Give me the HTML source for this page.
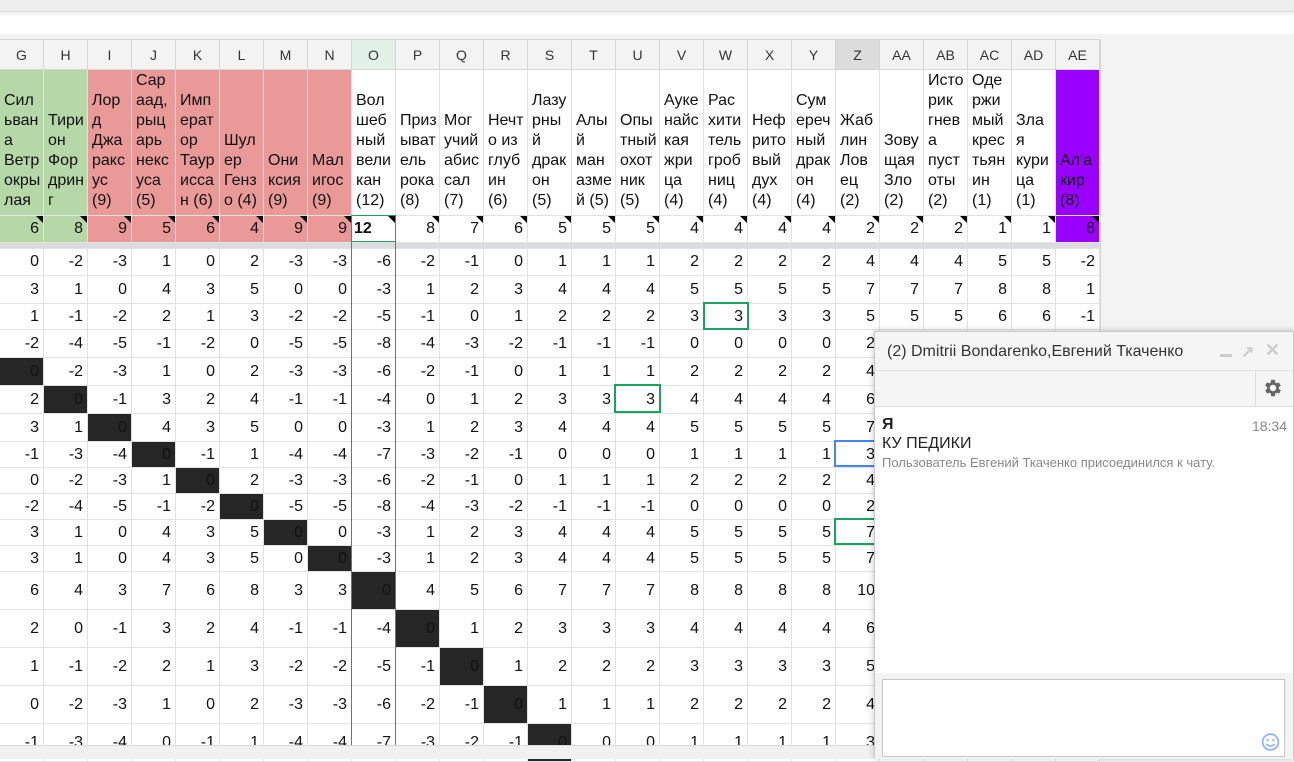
<!DOCTYPE html>
<html><head><meta charset="utf-8"><style>
body{margin:0;width:1294px;height:758px;overflow:hidden;background:#f3f3f3;font-family:"Liberation Sans",Arial,sans-serif;position:relative}
.top{position:absolute;left:0;top:0;width:1294px;height:11px;background:#eeeeee;border-bottom:1px solid #d8d8d8}
.bar{position:absolute;left:0;top:15px;width:1294px;height:19px;background:#fff}
table{position:absolute;left:-1px;top:39px;border-collapse:collapse;table-layout:fixed;background:#fff;width:1101px}
col{width:44px}
td{border:1px solid #e2e2e2;padding:0 4px 0 2px;font-size:16px;text-align:right;color:#111;overflow:hidden;white-space:nowrap}
tr.ch td{height:29px;background:#f3f3f3;text-align:center;font-size:14px;color:#333;border-color:#d6d6d6;padding:0}
tr.nm td{height:141px;text-align:left;vertical-align:bottom;line-height:20px;padding:0 0 4px 4px;white-space:normal;background:#fff}
tr.ct td{height:26px;position:relative}
tr.ct td::after{content:"";position:absolute;right:0;top:0;border-style:solid;border-width:0 7px 7px 0;border-color:transparent #000 transparent transparent}
tr.sp td{height:5px;background:#dadce0;border:none;padding:0}
.g{background:#b6d7a8!important}.r{background:#ea9999!important}.p{background:#9900ff!important}
.b{background:#262626}
tr.s td{height:37px}
</style></head><body>
<div class="top"></div><div class="bar"></div>
<table>
<colgroup><col><col><col><col><col><col><col><col><col><col><col><col><col><col><col><col><col><col><col><col><col><col><col><col><col></colgroup>
<tr class="ch"><td>G</td><td>H</td><td>I</td><td>J</td><td>K</td><td>L</td><td>M</td><td>N</td><td style="background:#e3f2e8">O</td><td>P</td><td>Q</td><td>R</td><td>S</td><td>T</td><td>U</td><td>V</td><td>W</td><td>X</td><td>Y</td><td style="background:#dcdcdc">Z</td><td>AA</td><td>AB</td><td>AC</td><td>AD</td><td>AE</td></tr>
<tr class="nm"><td class="g">Сил<br>ьван<br>а<br>Ветр<br>окры<br>лая</td><td class="g">Тири<br>он<br>Фор<br>дрин<br>г</td><td class="r">Лор<br>д<br>Джа<br>ракс<br>ус<br>(9)</td><td class="r">Сар<br>аад,<br>рыц<br>арь<br>некс<br>уса<br>(5)</td><td class="r">Имп<br>ерат<br>ор<br>Таур<br>исса<br>н (6)</td><td class="r">Шул<br>ер<br>Генз<br>о (4)</td><td class="r">Они<br>ксия<br>(9)</td><td class="r">Мал<br>игос<br>(9)</td><td>Вол<br>шеб<br>ный<br>вели<br>кан<br>(12)</td><td>Приз<br>ыват<br>ель<br>рока<br>(8)</td><td>Мог<br>учий<br>абис<br>сал<br>(7)</td><td>Нечт<br>о из<br>глуб<br>ин<br>(6)</td><td>Лазу<br>рны<br>й<br>драк<br>он<br>(5)</td><td>Алы<br>й<br>ман<br>азме<br>й (5)</td><td>Опы<br>тный<br>охот<br>ник<br>(5)</td><td>Ауке<br>найс<br>кая<br>жри<br>ца<br>(4)</td><td>Рас<br>хити<br>тель<br>гроб<br>ниц<br>(4)</td><td>Неф<br>рито<br>вый<br>дух<br>(4)</td><td>Сум<br>ереч<br>ный<br>драк<br>он<br>(4)</td><td>Жаб<br>лин<br>Лов<br>ец<br>(2)</td><td>Зову<br>щая<br>Зло<br>(2)</td><td>Исто<br>рик<br>гнев<br>а<br>пуст<br>оты<br>(2)</td><td>Оде<br>ржи<br>мый<br>крес<br>тьян<br>ин<br>(1)</td><td>Зла<br>я<br>кури<br>ца<br>(1)</td><td class="p">Ал'а<br>кир<br>(8)</td></tr>
<tr class="ct"><td class="g">6</td><td class="g">8</td><td class="r">9</td><td class="r">5</td><td class="r">6</td><td class="r">4</td><td class="r">9</td><td class="r">9</td><td style="text-align:left;font-weight:bold">12</td><td>8</td><td>7</td><td>6</td><td>5</td><td>5</td><td>5</td><td>4</td><td>4</td><td>4</td><td>4</td><td>2</td><td>2</td><td>2</td><td>1</td><td>1</td><td class="p">8</td></tr>
<tr class="sp"><td></td><td></td><td></td><td></td><td></td><td></td><td></td><td></td><td></td><td></td><td></td><td></td><td></td><td></td><td></td><td></td><td></td><td></td><td></td><td></td><td></td><td></td><td></td><td></td><td></td></tr>
<tr style="height:27px"><td>0</td><td>-2</td><td>-3</td><td>1</td><td>0</td><td>2</td><td>-3</td><td>-3</td><td>-6</td><td>-2</td><td>-1</td><td>0</td><td>1</td><td>1</td><td>1</td><td>2</td><td>2</td><td>2</td><td>2</td><td>4</td><td>4</td><td>4</td><td>5</td><td>5</td><td>-2</td></tr>
<tr style="height:28px"><td>3</td><td>1</td><td>0</td><td>4</td><td>3</td><td>5</td><td>0</td><td>0</td><td>-3</td><td>1</td><td>2</td><td>3</td><td>4</td><td>4</td><td>4</td><td>5</td><td>5</td><td>5</td><td>5</td><td>7</td><td>7</td><td>7</td><td>8</td><td>8</td><td>1</td></tr>
<tr style="height:26px"><td>1</td><td>-1</td><td>-2</td><td>2</td><td>1</td><td>3</td><td>-2</td><td>-2</td><td>-5</td><td>-1</td><td>0</td><td>1</td><td>2</td><td>2</td><td>2</td><td>3</td><td>3</td><td>3</td><td>3</td><td>5</td><td>5</td><td>5</td><td>6</td><td>6</td><td>-1</td></tr>
<tr style="height:28px"><td>-2</td><td>-4</td><td>-5</td><td>-1</td><td>-2</td><td>0</td><td>-5</td><td>-5</td><td>-8</td><td>-4</td><td>-3</td><td>-2</td><td>-1</td><td>-1</td><td>-1</td><td>0</td><td>0</td><td>0</td><td>0</td><td>2</td><td>2</td><td>2</td><td>3</td><td>3</td><td>-4</td></tr>
<tr style="height:28px"><td class="b">0</td><td>-2</td><td>-3</td><td>1</td><td>0</td><td>2</td><td>-3</td><td>-3</td><td>-6</td><td>-2</td><td>-1</td><td>0</td><td>1</td><td>1</td><td>1</td><td>2</td><td>2</td><td>2</td><td>2</td><td>4</td><td>4</td><td>4</td><td>5</td><td>5</td><td>-2</td></tr>
<tr style="height:28px"><td>2</td><td class="b">0</td><td>-1</td><td>3</td><td>2</td><td>4</td><td>-1</td><td>-1</td><td>-4</td><td>0</td><td>1</td><td>2</td><td>3</td><td>3</td><td>3</td><td>4</td><td>4</td><td>4</td><td>4</td><td>6</td><td>6</td><td>6</td><td>7</td><td>7</td><td>0</td></tr>
<tr style="height:28px"><td>3</td><td>1</td><td class="b">0</td><td>4</td><td>3</td><td>5</td><td>0</td><td>0</td><td>-3</td><td>1</td><td>2</td><td>3</td><td>4</td><td>4</td><td>4</td><td>5</td><td>5</td><td>5</td><td>5</td><td>7</td><td>7</td><td>7</td><td>8</td><td>8</td><td>1</td></tr>
<tr style="height:26px"><td>-1</td><td>-3</td><td>-4</td><td class="b">0</td><td>-1</td><td>1</td><td>-4</td><td>-4</td><td>-7</td><td>-3</td><td>-2</td><td>-1</td><td>0</td><td>0</td><td>0</td><td>1</td><td>1</td><td>1</td><td>1</td><td>3</td><td>3</td><td>3</td><td>4</td><td>4</td><td>-3</td></tr>
<tr style="height:26px"><td>0</td><td>-2</td><td>-3</td><td>1</td><td class="b">0</td><td>2</td><td>-3</td><td>-3</td><td>-6</td><td>-2</td><td>-1</td><td>0</td><td>1</td><td>1</td><td>1</td><td>2</td><td>2</td><td>2</td><td>2</td><td>4</td><td>4</td><td>4</td><td>5</td><td>5</td><td>-2</td></tr>
<tr style="height:26px"><td>-2</td><td>-4</td><td>-5</td><td>-1</td><td>-2</td><td class="b">0</td><td>-5</td><td>-5</td><td>-8</td><td>-4</td><td>-3</td><td>-2</td><td>-1</td><td>-1</td><td>-1</td><td>0</td><td>0</td><td>0</td><td>0</td><td>2</td><td>2</td><td>2</td><td>3</td><td>3</td><td>-4</td></tr>
<tr style="height:26px"><td>3</td><td>1</td><td>0</td><td>4</td><td>3</td><td>5</td><td class="b">0</td><td>0</td><td>-3</td><td>1</td><td>2</td><td>3</td><td>4</td><td>4</td><td>4</td><td>5</td><td>5</td><td>5</td><td>5</td><td>7</td><td>7</td><td>7</td><td>8</td><td>8</td><td>1</td></tr>
<tr style="height:26px"><td>3</td><td>1</td><td>0</td><td>4</td><td>3</td><td>5</td><td>0</td><td class="b">0</td><td>-3</td><td>1</td><td>2</td><td>3</td><td>4</td><td>4</td><td>4</td><td>5</td><td>5</td><td>5</td><td>5</td><td>7</td><td>7</td><td>7</td><td>8</td><td>8</td><td>1</td></tr>
<tr class="s"><td>6</td><td>4</td><td>3</td><td>7</td><td>6</td><td>8</td><td>3</td><td>3</td><td class="b">0</td><td>4</td><td>5</td><td>6</td><td>7</td><td>7</td><td>7</td><td>8</td><td>8</td><td>8</td><td>8</td><td>10</td><td>10</td><td>10</td><td>11</td><td>11</td><td>4</td></tr>
<tr class="s"><td>2</td><td>0</td><td>-1</td><td>3</td><td>2</td><td>4</td><td>-1</td><td>-1</td><td>-4</td><td class="b">0</td><td>1</td><td>2</td><td>3</td><td>3</td><td>3</td><td>4</td><td>4</td><td>4</td><td>4</td><td>6</td><td>6</td><td>6</td><td>7</td><td>7</td><td>0</td></tr>
<tr class="s"><td>1</td><td>-1</td><td>-2</td><td>2</td><td>1</td><td>3</td><td>-2</td><td>-2</td><td>-5</td><td>-1</td><td class="b">0</td><td>1</td><td>2</td><td>2</td><td>2</td><td>3</td><td>3</td><td>3</td><td>3</td><td>5</td><td>5</td><td>5</td><td>6</td><td>6</td><td>-1</td></tr>
<tr class="s"><td>0</td><td>-2</td><td>-3</td><td>1</td><td>0</td><td>2</td><td>-3</td><td>-3</td><td>-6</td><td>-2</td><td>-1</td><td class="b">0</td><td>1</td><td>1</td><td>1</td><td>2</td><td>2</td><td>2</td><td>2</td><td>4</td><td>4</td><td>4</td><td>5</td><td>5</td><td>-2</td></tr>
<tr class="s"><td>-1</td><td>-3</td><td>-4</td><td>0</td><td>-1</td><td>1</td><td>-4</td><td>-4</td><td>-7</td><td>-3</td><td>-2</td><td>-1</td><td class="b">0</td><td>0</td><td>0</td><td>1</td><td>1</td><td>1</td><td>1</td><td>3</td><td>3</td><td>3</td><td>4</td><td>4</td><td>-3</td></tr>
</table>
<div style="position:absolute;left:1100px;top:39px;width:1px;height:720px;background:#d6d6d6"></div>
<div style="position:absolute;left:351px;top:215px;width:1px;height:543px;background:#1aa260"></div>
<div style="position:absolute;left:395px;top:215px;width:1px;height:543px;background:#1aa260"></div>
<div style="position:absolute;left:351px;top:215px;width:43px;height:25px;border:1px solid #1aa260"></div>
<div style="position:absolute;left:703px;top:302px;width:42px;height:24px;border:2px solid #1aa260"></div>
<div style="position:absolute;left:614px;top:384px;width:43px;height:25px;border:2px solid #1aa260"></div>
<div style="position:absolute;left:834px;top:440px;width:44px;height:23px;border:2px solid #4285f4"></div>
<div style="position:absolute;left:834px;top:518px;width:44px;height:23px;border:2px solid #1aa260"></div>
<div style="position:absolute;left:0;top:745px;width:1294px;height:13px;background:#f1f1f1;border-top:1px solid #d8d8d8"></div>

<div style="position:absolute;left:874px;top:331px;width:420px;height:427px;background:#fff;border:1px solid #c8c8c8;box-shadow:0 0 6px rgba(0,0,0,.25);box-sizing:border-box">
 <div style="height:38px;background:#f5f5f5;border-bottom:1px solid #e3e3e3;position:relative">
  <div style="position:absolute;left:12px;top:11px;font-size:16px;color:#333">(2) Dmitrii Bondarenko,Евгений Ткаченко</div>
  <div style="position:absolute;left:345px;top:22px;width:12px;height:3px;background:#ccc"></div>
  <div style="position:absolute;left:366px;top:10px;font-size:16px;color:#ccc;font-weight:bold">↗</div>
  <div style="position:absolute;left:390px;top:8px;font-size:18px;color:#ccc;font-weight:bold">✕</div>
 </div>
 <div style="height:35px;background:#f5f5f5;border-bottom:1px solid #ddd;position:relative">
  <div style="position:absolute;left:380px;top:0;width:1px;height:35px;background:#ddd"></div>
  <svg style="position:absolute;left:387px;top:6px" width="22" height="22" viewBox="0 0 24 24"><path fill="#666" d="M19.4 13a7.5 7.5 0 000-2l2.1-1.6-2-3.5-2.5 1a7.3 7.3 0 00-1.7-1L15 3h-4l-.4 2.9a7.3 7.3 0 00-1.7 1l-2.5-1-2 3.5L6.6 11a7.5 7.5 0 000 2l-2.1 1.6 2 3.5 2.5-1a7.3 7.3 0 001.7 1L11 21h4l.4-2.9a7.3 7.3 0 001.7-1l2.5 1 2-3.5zM13 15.5a3.5 3.5 0 110-7 3.5 3.5 0 010 7z" transform="translate(-1 0)"/></svg>
 </div>
 <div style="position:relative;height:266px">
  <div style="position:absolute;left:7px;top:9px;font-size:16px;font-weight:bold;color:#222">Я</div>
  <div style="position:absolute;right:6px;top:11px;font-size:14px;color:#888">18:34</div>
  <div style="position:absolute;left:7px;top:28px;font-size:16px;color:#222">КУ ПЕДИКИ</div>
  <div style="position:absolute;left:7px;top:48px;font-size:13px;color:#888">Пользователь Евгений Ткаченко присоединился к чату.</div>
 </div>
 <div style="position:absolute;left:0;top:341px;width:418px;height:86px;background:#f3f3f3">
  <div style="position:absolute;left:7px;top:6px;width:403px;height:78px;background:#fff;border:1px solid #c8c8c8;box-sizing:border-box">
   <svg style="position:absolute;right:4px;bottom:4px" width="19" height="19" viewBox="0 0 20 20"><circle cx="10" cy="9.5" r="8.3" fill="none" stroke="#8ab4f8" stroke-width="1.8"/><circle cx="7" cy="7.5" r="1.2" fill="#8ab4f8"/><circle cx="13" cy="7.5" r="1.2" fill="#8ab4f8"/><path d="M5.5 11.5q4.5 4.5 9 0" fill="none" stroke="#8ab4f8" stroke-width="1.6"/></svg>
  </div>
 </div>
</div>
</body></html>
